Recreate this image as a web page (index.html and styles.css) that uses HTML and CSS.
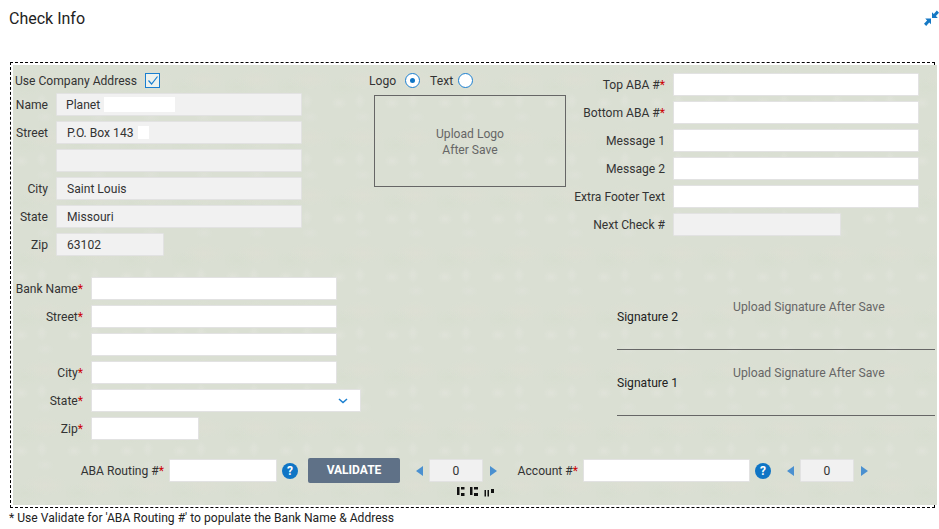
FILE: index.html
```html
<!DOCTYPE html>
<html lang="en">
<head>
<meta charset="utf-8">
<title>Check Info</title>
<link rel="stylesheet" href="styles.css">
</head>
<body>
<header class="head">
  <h1 class="title">Check Info</h1>
  <svg class="collapse" width="15" height="16" viewBox="0 0 15 16"><path fill="#1679c5" d="M8 8V2.2L9.8 3.9 12.8 .6 15 2.8 11.9 6 13.8 8ZM7 8.5V14.3L5.2 12.6 2.2 15.9 0 13.7 3.1 10.5 1.2 8.5Z"/></svg>
</header>
<main class="panel">
  <div class="sheet">
    <section class="top">
      <div class="company">
        <div class="use-row"><span>Use Company Address</span>
          <span class="check"><svg width="12" height="11" viewBox="0 0 12 11"><path d="M1.5 5.5 4.6 9 10.5 1.5" fill="none" stroke="#1a7fd0" stroke-width="1.2"/></svg></span>
        </div>
        <div class="row"><label class="lab lab-c">Name</label><div class="field ro wide name"><span>Planet</span><span class="mask mask-name"></span></div></div>
        <div class="row"><label class="lab lab-c">Street</label><div class="field ro wide"><span>P.O. Box 143</span><span class="mask mask-street"></span></div></div>
        <div class="row"><label class="lab lab-c"></label><div class="field ro wide"></div></div>
        <div class="row"><label class="lab lab-c">City</label><div class="field ro wide">Saint Louis</div></div>
        <div class="row"><label class="lab lab-c">State</label><div class="field ro wide">Missouri</div></div>
        <div class="row"><label class="lab lab-c">Zip</label><div class="field ro short">63102</div></div>
      </div>
      <div class="logo-col">
        <div class="choice"><span>Logo</span><span class="radio r-logo on"></span><span class="choice-text">Text</span><span class="radio r-text"></span></div>
        <div class="upload">Upload Logo<br>After Save</div>
      </div>
      <div class="aba">
        <div class="row"><label class="lab lab-a">Top ABA #<i>*</i></label><div class="field wide"></div></div>
        <div class="row"><label class="lab lab-a">Bottom ABA #<i>*</i></label><div class="field wide"></div></div>
        <div class="row"><label class="lab lab-a">Message 1</label><div class="field wide"></div></div>
        <div class="row"><label class="lab lab-a">Message 2</label><div class="field wide"></div></div>
        <div class="row"><label class="lab lab-a">Extra Footer Text</label><div class="field wide"></div></div>
        <div class="row"><label class="lab lab-a">Next Check #</label><div class="field ro next"></div></div>
      </div>
    </section>
    <section class="middle">
      <div class="bank">
        <div class="row"><label class="lab lab-b">Bank Name<i>*</i></label><div class="field wide"></div></div>
        <div class="row"><label class="lab lab-b">Street<i>*</i></label><div class="field wide"></div></div>
        <div class="row"><label class="lab lab-b"></label><div class="field wide"></div></div>
        <div class="row"><label class="lab lab-b">City<i>*</i></label><div class="field wide"></div></div>
        <div class="row"><label class="lab lab-b">State<i>*</i></label><div class="field select"><svg width="10" height="6" viewBox="0 0 10 6"><path d="M1 1 5 4.6 9 1" fill="none" stroke="#1a7fd0" stroke-width="1.5"/></svg></div></div>
        <div class="row"><label class="lab lab-b">Zip<i>*</i></label><div class="field short"></div></div>
      </div>
      <div class="signs">
        <div class="sign"><span class="sign-label">Signature 2</span><span class="sign-note">Upload Signature After Save</span></div>
        <div class="sign"><span class="sign-label">Signature 1</span><span class="sign-note">Upload Signature After Save</span></div>
      </div>
    </section>
    <section class="route">
      <label class="lab lab-r">ABA Routing #<i>*</i></label>
      <div class="field f-routing"></div>
      <span class="help">?</span>
      <button class="validate" type="button">VALIDATE</button>
      <span class="tri left t1"></span>
      <div class="field ro num">0</div>
      <span class="tri right"></span>
      <label class="lab lab-acc">Account #<i>*</i></label>
      <div class="field f-account"></div>
      <span class="help">?</span>
      <span class="tri left t2"></span>
      <div class="field ro num">0</div>
      <span class="tri right"></span>
    </section>
    <svg class="blobs" width="38" height="10" viewBox="0 0 38 10"><path fill="#111" d="M0 0h2.5v8H0zM4 0h3.5v2.5H4zM4 6h3.5v3H4zM13 0h2.5v8H13zM17 0h4v2.5h-4zM17 6h4v3h-4zM27.5 3h1.5v6.5h-1.5zM30.5 3h1.5v6.5h-1.5zM34 2h3v4h-3z"/></svg>
  </div>
</main>
<p class="note">* Use Validate for 'ABA Routing #' to populate the Bank Name &amp; Address</p>
</body>
</html>
```
FILE: styles.css
```css
* { box-sizing: border-box; }
html, body { margin: 0; padding: 0; background: #fff; overflow: hidden; }
body { width: 939px; height: 529px; font: 12.1px/14px Roboto, "Liberation Sans", sans-serif; color: #333; }
.head { display: flex; justify-content: space-between; align-items: flex-start; height: 62px; padding-left: 9px; }
.title { margin: 9px 0 0; font-size: 16px; line-height: 19px; font-weight: 400; color: #222; }
.collapse { margin-top: 10px; }
.panel { width: 925px; height: 446px; margin-left: 10px; padding: 2px; border: 1px dashed #000; }
.sheet {
  width: 924px; height: 440px; padding: 3px 2px 0;
  background-color: #dadfd3;
  background-image:
    radial-gradient(ellipse 8px 6px at 8px 38px, rgba(232,232,226,.4), transparent),
    radial-gradient(ellipse 6px 8px at 29px 36px, rgba(232,232,228,.35), transparent),
    radial-gradient(ellipse 9px 6px at 32px 52px, rgba(228,228,224,.35), transparent),
    radial-gradient(ellipse 22px 10px at 32px 14px, rgba(226,222,212,.35), transparent),
    radial-gradient(ellipse 20px 9px at 12px 22px, rgba(212,220,204,.35), transparent);
  background-size: 53px 58px;
}
.top, .middle, .route, .row, .use-row, .choice { display: flex; }
.top { height: 193px; }
.company { width: 354px; }
.use-row { align-items: center; height: 25px; }
.check { display: flex; align-items: center; justify-content: center; width: 15px; height: 15px; margin-left: 8px; border: 1px solid #1a7fd0; background: #eef2ee; }
.row { align-items: center; height: 24px; margin-bottom: 4px; }
.row .field { align-self: flex-start; }
.lab { flex: none; margin-right: 8px; text-align: right; color: #333; white-space: nowrap; }
.lab i { font-style: normal; color: #c00; }
.lab-c { width: 33px; }
.lab-a { width: 96px; }
.lab-b { width: 68px; }
.field { display: flex; align-items: center; height: 23px; padding-left: 10px; background: #fff; border: 1px solid #e2e2e2; border-radius: 1px; color: #333; white-space: nowrap; }
.ro { background: #f1f1f1; }
.wide { width: 246px; }
.name { padding-left: 9px; }
.short { width: 108px; }
.next { width: 168px; }
.select { width: 270px; justify-content: flex-end; padding-right: 12px; padding-left: 0; }
.mask { display: inline-block; background: #fff; }
.mask-name { width: 71px; height: 15px; margin-left: 4px; }
.mask-street { width: 11px; height: 13px; margin-left: 4px; }
.logo-col { width: 200px; padding-top: 5px; }
.choice { align-items: center; height: 15px; }
.choice-text { margin-left: 10px; }
.radio { width: 15px; height: 15px; border: 1px solid #1a7fd0; border-radius: 50%; background: #fff; display: flex; align-items: center; justify-content: center; }
.r-logo { margin-left: 9px; }
.r-text { margin-left: 5px; }
.radio.on::after { content: ""; width: 5px; height: 5px; border-radius: 50%; background: #0f75c5; }
.upload { display: block; width: 192px; height: 92px; margin: 7px 0 0 5px; padding-top: 30px; border: 1px solid #666; color: #666; text-align: center; line-height: 16px; }
.aba { padding-top: 5px; }
.middle { height: 181px; margin-top: 16px; justify-content: space-between; }
.signs { width: 318px; padding-top: 7px; }
.sign { display: flex; height: 66px; border-bottom: 1px solid #666; }
.sign-label { width: 116px; padding-top: 26px; color: #222; }
.sign-note { padding-top: 16px; color: #666; font-size: 12.2px; }
.route { align-items: center; height: 25px; }
.lab-r { width: 149px; margin-right: 5px; }
.f-routing { width: 108px; }
.help { flex: none; width: 16px; height: 16px; margin-left: 5px; border-radius: 50%; background: #0f75c5; color: #fff; font-weight: 700; font-size: 12px; line-height: 16px; text-align: center; }
.validate { flex: none; width: 92px; height: 25px; margin-left: 10px; padding: 0; border: 0; border-radius: 2px; background: #5f7187; color: #fff; font: 700 12px/25px Roboto, "Liberation Sans", sans-serif; }
.tri { flex: none; width: 0; height: 0; border-style: solid; border-color: transparent; border-width: 5px 0; }
.tri.left { border-right: 7px solid #4a90d0; margin-right: 6px; }
.tri.right { border-left: 7px solid #4a90d0; margin-left: 7px; }
.t1 { margin-left: 16px; }
.t2 { margin-left: 16px; }
.num { width: 54px; justify-content: center; padding: 0; }
.lab-acc { width: 65px; margin: 0 5px 0 16px; }
.f-account { width: 167px; }
.blobs { display: block; margin: 4px 0 0 442px; }
.note { margin: 3px 0 0 9px; color: #222; }
```
